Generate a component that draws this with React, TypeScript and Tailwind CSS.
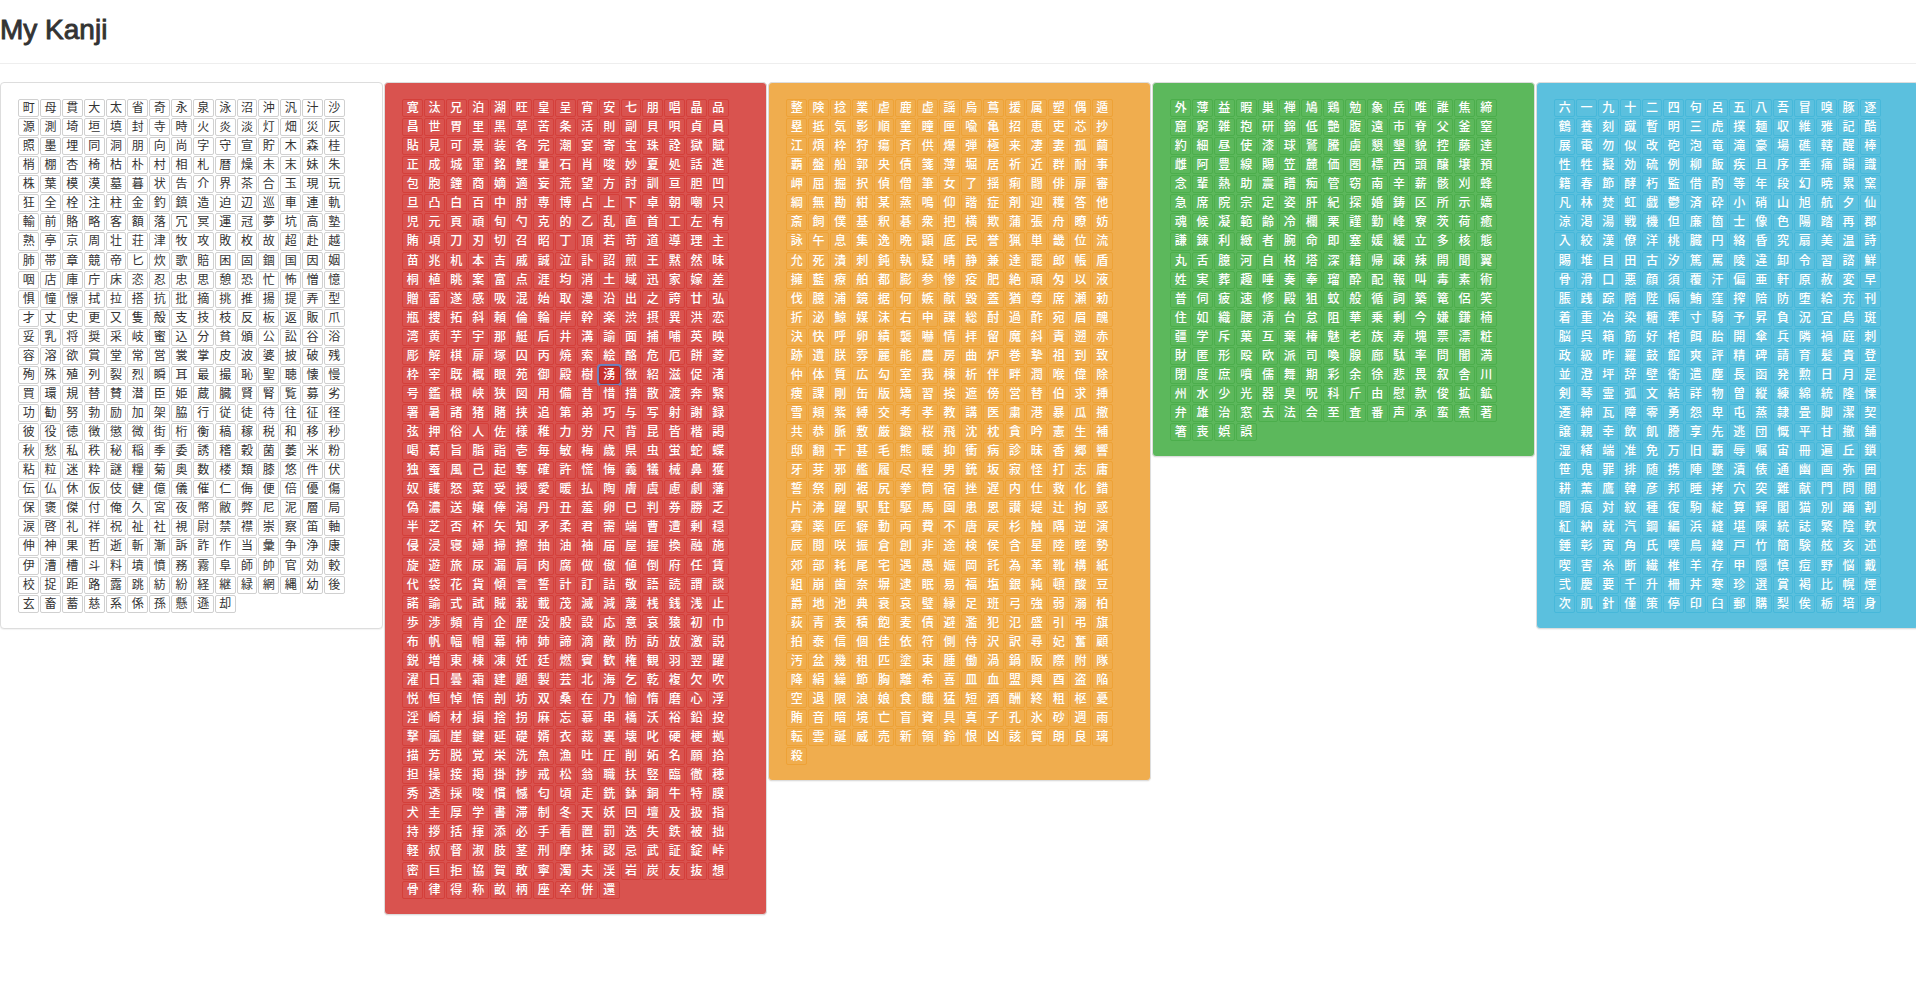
const sets = [
  {
    panel: "bg-white",
    cell: "border-[#d0d0d0] text-[#333]",
    rows: [
      "町母貫大太省奇永泉泳沼沖汎汁沙",
      "源測埼垣填封寺時火炎淡灯畑災灰",
      "照墨埋同洞朋向尚字守宣貯木森桂",
      "梢棚杏椅枯朴村相札暦燥未末妹朱",
      "株葉模漠墓暮状告介界茶合玉現玩",
      "狂全栓注柱金釣鎮造迫辺巡車連軌",
      "輸前賂略客額落冗冥運冠夢坑高塾",
      "熟亭京周壮荘津牧攻敗枚故超赴越",
      "肺帯章競帝匕炊歌賠困固錮国因姻",
      "咽店庫庁床恣忍忠思憩恐忙怖憎憶",
      "惧憧憬拭拉搭抗批摘挑推揚提弄型",
      "才丈史更又隻殻支技枝反板返販爪",
      "妥乳将奨采岐蜜込分貧頒公訟谷浴",
      "容溶欲賞堂常営裳掌皮波婆披破残",
      "殉殊殖列裂烈瞬耳最撮恥聖聴懐慢",
      "買環規替賛潜臣姫蔵臓賢腎覧募劣",
      "功勧努勃励加架脇行従徒待往征径",
      "彼役徳徴懲微街桁衡稿稼税和移秒",
      "秋愁私秩秘稲季委誘稽穀菌萎米粉",
      "粘粒迷粋謎糧菊奥数楼類膝悠件伏",
      "伝仏休仮伎健億儀催仁侮便倍優傷",
      "保褒傑付俺久宮夜幣敝弊尼泥層局",
      "涙啓礼祥祝祉社視尉禁襟崇察笛軸",
      "伸神果哲逝斬漸訴詐作当彙争浄康",
      "伊漕槽斗料墳憤務霧阜師帥官効較",
      "校捉距路露跳紡紛経継緑網縄幼後",
      "玄畜蓄慈系係孫懸遜却",
    ],
  },
  {
    panel: "bg-[#d9534f]",
    cell: "border-[#d43f3a] text-white font-medium",
    rows: [
      "寛汰兄泊湖旺皇呈宵安七朋唱晶品",
      "昌世胃里黒草苦条活則副貝唄貞員",
      "貼見可景装各完潮宴寄宝珠詮獄賦",
      "正成城軍銘鯉量石肖唆妙夏処話進",
      "包胞鐘商嫡適妄荒望方討訓亘胆凹",
      "旦凸白百中肘専博占上下卓朝嘲只",
      "児元頁頑旬勺克的乙乱直首工左有",
      "賄項刀刃切召昭丁頂若苛道導理主",
      "苗兆机本吉戚誠泣訃詔煎王黙然味",
      "桐植眺案富点涯均消土域迅家嫁差",
      "贈雷遂感吸混始取漫沿出之誇廿弘",
      "瓶捜拓斜頼倫輪岸幹楽渋摂異洪恋",
      "湾黄芋宇那艇后井溝諭面捕哺英映",
      "彫解棋扉塚囚丙焼索絵酪危厄餅菱",
      "枠宰既概眼苑御殿樹湧徴紹滋促渚",
      "号鑑根峡狭図用備昔惜措散渡奔緊",
      "署暑諸猪賭挟追第弟巧与写射謝録",
      "弦押俗人佐様稚力労尺背昆皆楷謁",
      "喝葛旨脂詣壱毎敏梅歳県虫蛍蛇蝶",
      "独蚕風己起奪確許慌悔義犠械鼻獲",
      "奴護怒菜受授愛暖払陶膚虞慮劇藩",
      "偽濃送嬢俸潟丹丑羞卵巳判券勝乏",
      "半芝否杯矢知矛柔君需端曹遭剰穏",
      "侵浸寝婦掃擦抽油袖届屋握換融施",
      "旋遊旅尿漏肩肉腐做傲値倒府任賃",
      "代袋花貨傾言誓計訂詰敬語読謂談",
      "諾諭式試賊栽載茂滅減蔑桟銭浅止",
      "歩渉頻肯企歴没股設応意哀猿初巾",
      "布帆幅帽幕柿姉諦滴敵防訪放激説",
      "鋭増東棟凍妊廷燃賓歓権観羽翌躍",
      "濯日曇霜建題製芸北海乞乾複欠吹",
      "悦恒悼悟剖坊双桑在乃愉惰磨心浮",
      "淫崎材損捨拐麻忘慕串橋沃裕鉛投",
      "撃嵐崖鍵延礎婿衣裁裏壊叱硬梗拠",
      "描芳脱覚栄洗魚漁吐圧削妬名願拾",
      "担操接掲掛捗戒松翁職扶竪臨徹穂",
      "秀透採唆慣憾匂頃走銑鉢銅牛特膜",
      "犬圭厚学書滞制冬天妖回壇及扱指",
      "持拶括揮添必手看置罰迭失鉄被拙",
      "軽叔督淑肢茎刑摩抹認忌武証錠峠",
      "密巨拒協賀敢寧濁夫渓岩炭友抜想",
      "骨律得称畝柄座卒併還",
    ],
  },
  {
    panel: "bg-[#f0ad4e]",
    cell: "border-[#eea236] text-white font-medium",
    rows: [
      "整険捻業虐鹿虚謡烏蔦援属塑偶遁",
      "塁抵気影順童瞳匣喩亀招恵吏芯抄",
      "江煩枠狩瘍斉供爆弾極来凄妻孤繭",
      "覇盤船郭央債箋薄堀居祈近群耐事",
      "岬屈掘択偵僧筆女了揺痢闘俳扉審",
      "綱無勘紺某蒸鳴仰諧症剤迎穫答他",
      "斎飼僕基釈碁衆把横欺蒲張舟瞭妨",
      "詠午息集逸晩顕底民誉猟単畿位流",
      "允死潰刺鈍執疑晴静兼達罷郎帳盾",
      "擁藍療舶都膨参惨疫肥絶頑匁以液",
      "伐臆浦鏡据何嫉献毀蓋猶尊席瀬勅",
      "折泌鯨媒沫右申諜総酎過酢宛眉醜",
      "決快呼卵績襲嚇情拝留魔斜責遡赤",
      "跡遺朕雰麗能農房曲炉巻摯祖到致",
      "仲体質広勾室我棟析伴畔潤喉偉除",
      "痩課剛缶版矯習挨遮傍営替伯求挿",
      "雪頬紫縛交考孝教講医粛港暴瓜撤",
      "共恭脈敷厳鍛桜飛沈枕貪吟憲生補",
      "邸翻干甚毛熊暖抑衝病診昧香郷響",
      "牙芽邪艦履尽程男銃坂寂怪打志庸",
      "誓祭刷裾尻拳筒宿挫遅内仕救化錯",
      "片沸躍駅駐駆馬園患恩讃堤辻拘惑",
      "寡薬匠癖動両費不唐戻杉触隅逆演",
      "辰閲咲振倉創非途検侯含星陸睦勢",
      "郊部耗尾宅遇愚娠岡託為革靴構紙",
      "組崩歯奈塀逮眠易福塩銀純頓酸豆",
      "爵地池典衰哀璧縁足班弓強弱溺柏",
      "荻青表積飽麦債避濫犯氾盛引弔旗",
      "拍泰信個佳依符側侍沢訳尋妃奮顧",
      "汚盆幾租匹塗束腫働渦鍋阪際附隊",
      "降絹繰節胸離希喜皿血盟興酉盗陥",
      "空退限浪娘食餓猛短酒酬終粗枢憂",
      "賄音暗境亡盲資具真子孔氷砂週雨",
      "転雲誕威売新領鈴恨凶該貿朗良璃",
      "殺",
    ],
  },
  {
    panel: "bg-[#5cb85c]",
    cell: "border-[#4cae4c] text-white font-medium",
    rows: [
      "外薄益暇巣禅鳩鶏勉象岳唯誰焦締",
      "窟窮雑抱研錦低艶腹遠市脊父釜窒",
      "約細昼使漆球鷲騰虜懇墾貌控藤達",
      "雌阿豊線賜笠麓価圏標西頭醸壌預",
      "念輩熱助震譜痴管窃南辛薪骸刈蜂",
      "急席院宗定姿肝紀探婚鋳区所示嬌",
      "魂候凝範齢冷欄栗謹勤峰寮茨荷癒",
      "謙錬利緻者腕命即塞媛緩立多核態",
      "丸舌臆河自格塔深籍帰疎辣開聞翼",
      "姓実葬趣唾奏奉瑠酔配報叫毒素術",
      "普伺疲速修殿狙蚊般循詞築篭侶笑",
      "住如織腰清台怠阻華乗剰今嫌鎌楠",
      "疆学斥菓互棄椿魅老族寿塊票漂粧",
      "財匿形殴欧派司喚腺廊駄率問闇満",
      "閉度庶噴儒舞期彩余徐悲畏叙舎川",
      "州水少光器臭呪科斤由慰款俊拡鉱",
      "弁雄治窓去法会至査番声承蛮煮著",
      "箸喪娯誤",
    ],
  },
  {
    panel: "bg-[#5bc0de]",
    cell: "border-[#46b8da] text-white font-medium",
    rows: [
      "六一九十二四句呂五八吾冒嗅豚逐",
      "鶴養刻蹴暫明三虎撲麺収維雅記酷",
      "展電勿似改砲泡竜滝豪場礁轄醒棒",
      "性牲擬効硫例柳飯疾且序垂痛韻識",
      "籍春節酵朽監借酌等年段幻暁累窯",
      "凡林焚虹戯鬱済砕小硝山旭航夕仙",
      "涼渇湯戦機但廉箇士像色陽踏再郡",
      "入絞漢僚洋桃臓円絡昏究扇美温詩",
      "賜堆目田古汐篤罵陵違卸令習諮鮮",
      "骨滑口悪顔須覆汗偏亜軒原赦変早",
      "脹践踪階陛隔鮪窪搾陪防堕給充刊",
      "着重冶染糖準寸騎予昇負況宜島斑",
      "脳呉箱筋好棺餌胎開傘兵隣禍庭刺",
      "政級昨羅鼓館爽評精碑請育髪貴登",
      "並澄坪辞壁衛遣塵長函発勲日月是",
      "剣琴霊弧文結詳物曽縦練綿統隆慄",
      "遷紳瓦障零勇怨卑屯蒸隷畳脚潔契",
      "譲親幸飲飢謄享先逃団慨平甘撤舗",
      "湿緒端准免万旧覇辱嘱宙冊遍丘鎖",
      "笹鬼罪排随携陣墜漬俵通幽画弥囲",
      "耕薫鷹韓彦邦睡拷穴突難献門問閲",
      "闘痕対紋種復駒綻算輝閣猫別踊割",
      "紅納就汽鋼編浜縫堪陳統誌繁陰軟",
      "錘彰寅角氏嘆鳥緯戸竹簡験舷亥述",
      "喫害糸断繊椎羊存甲隠慎痘野悩戴",
      "弐慶要千升柵丼寒珍選賞褐比幌煙",
      "次肌針僅策停印臼郵購梨俟栃培身",
    ],
  },
];

function KanjiButton({ kanji, cell, active }: { kanji: string; cell: string; active: boolean }) {
  if (active) {
    return (
      <div className="flex items-center justify-center rounded-[2px] border border-[#ac2925] bg-[#c9302c] font-medium text-white outline-2 outline-[#6d7fbb]">
        {kanji}
      </div>
    );
  }
  return <div className={"flex items-center justify-center rounded-[2px] border " + cell}>{kanji}</div>;
}

export default function App() {
  return (
    <div className="h-screen overflow-hidden bg-white font-['Liberation_Sans','Noto_Sans_CJK_JP',sans-serif] text-[#333]">
      <div className="h-[64px] border-b border-[#eee] pt-[14px]">
        <h1 className="text-[28px] leading-[31px] font-medium [-webkit-text-stroke:0.9px_#333]">My Kanji</h1>
      </div>
      <div className="mt-[18px] flex items-start gap-[1px]">
        {sets.map((set, s) => (
          <div
            key={s}
            className={"w-[383px] shrink-0 rounded border border-[#ddd] p-[15px] shadow-[0_1px_1px_rgba(0,0,0,0.05)] " + set.panel}
          >
            <div className="ml-[2.3px] mt-[1px] grid auto-rows-[18.07px] grid-cols-[repeat(15,20.83px)] gap-[1px] text-[12px] leading-none">
              {set.rows.flatMap((row, r) =>
                Array.from(row).map((kanji, c) => (
                  <KanjiButton key={r + "-" + c} kanji={kanji} cell={set.cell} active={s === 1 && r === 14 && c === 9} />
                )),
              )}
            </div>
          </div>
        ))}
      </div>
    </div>
  );
}
